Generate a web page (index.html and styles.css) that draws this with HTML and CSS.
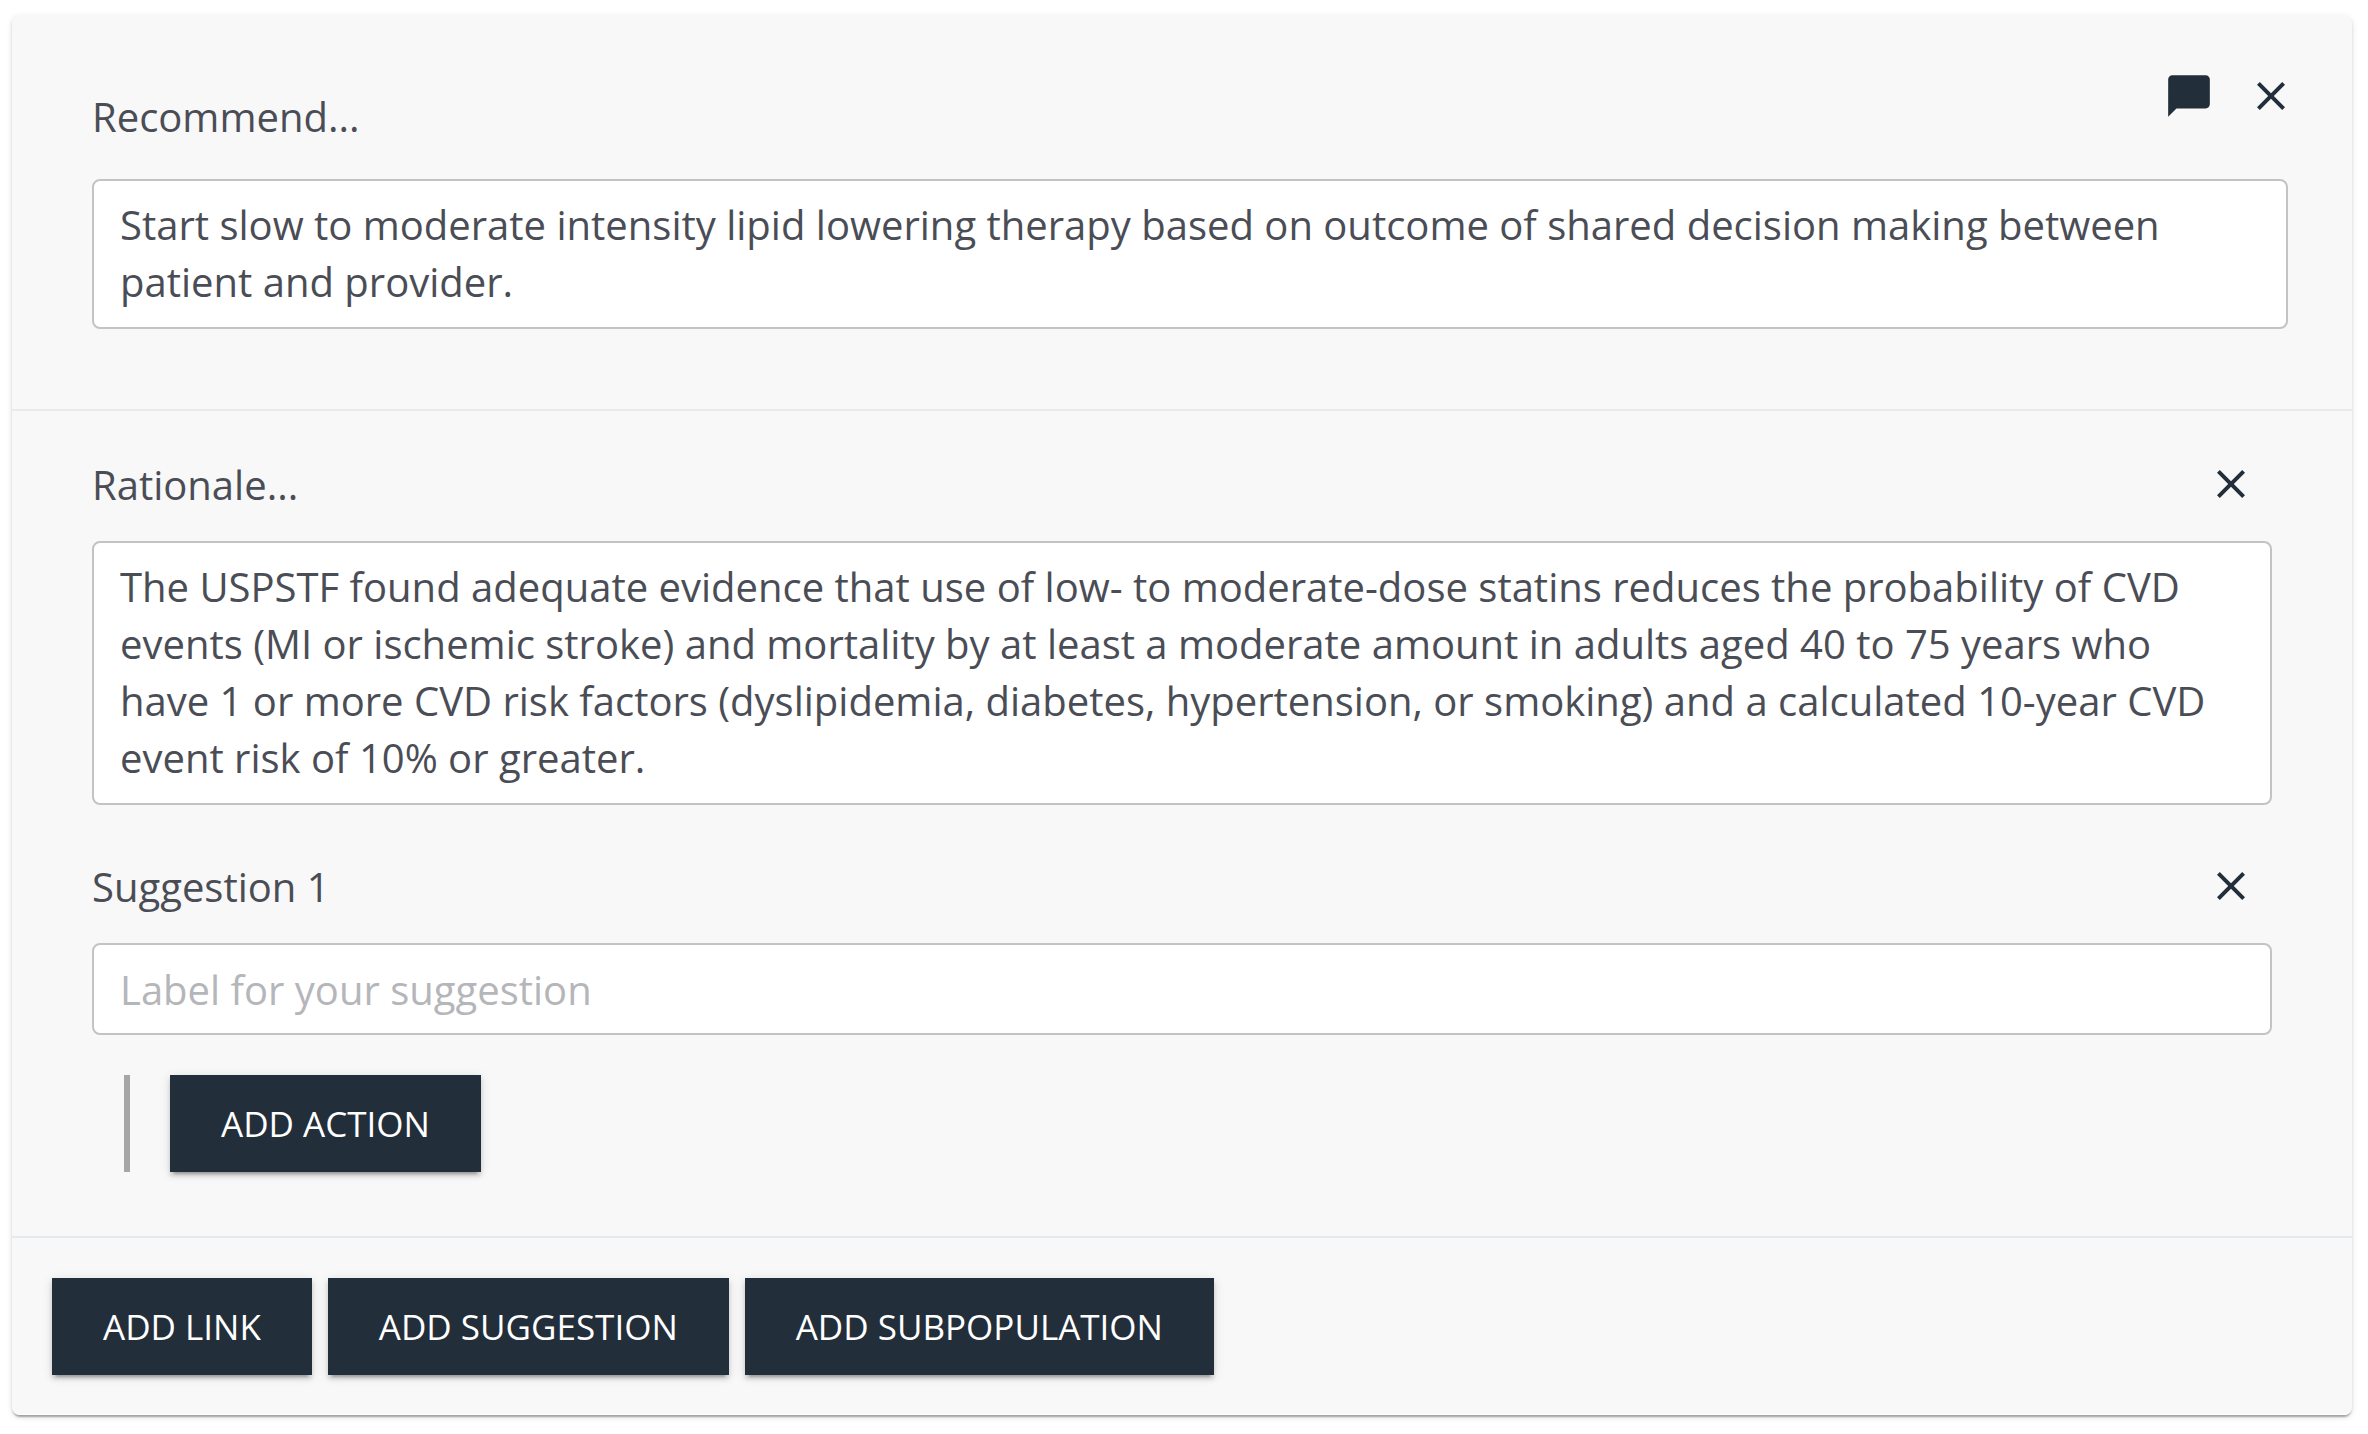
FILE: index.html
```html
<!DOCTYPE html>
<html lang="en">
<head>
  <meta charset="utf-8">
  <meta name="viewport" content="width=device-width, initial-scale=1">
  <title>Recommendation</title>
  <link rel="stylesheet" href="styles.css">
</head>
<body>
  <main class="card">
    <section class="recommendation">
      <header class="recommendation-header">
        <label class="label" for="recommend">Recommend...</label>
        <div class="actions">
          <button class="icon-button" type="button" aria-label="Comment">
            <svg class="icon icon-comment" viewBox="0 0 24 24" aria-hidden="true"><path d="M20 2H4c-1.1 0-1.99.9-1.99 2L2 22l4-4h14c1.1 0 2-.9 2-2V4c0-1.1-.9-2-2-2z"/></svg>
          </button>
          <button class="icon-button" type="button" aria-label="Remove recommendation">
            <svg class="icon" viewBox="0 0 24 24" aria-hidden="true"><path d="M19 6.41L17.59 5 12 10.59 6.41 5 5 6.41 10.59 12 5 17.59 6.41 19 12 13.41 17.59 19 19 17.59 13.41 12z"/></svg>
          </button>
        </div>
      </header>
      <div class="recommendation-body">
        <textarea class="field field-multiline" id="recommend" rows="2" spellcheck="false">Start slow to moderate intensity lipid lowering therapy based on outcome of shared decision making between patient and provider.</textarea>
      </div>
    </section>

    <section class="details">
      <div class="group">
        <header class="group-header">
          <label class="label" for="rationale">Rationale...</label>
          <button class="icon-button" type="button" aria-label="Remove rationale">
            <svg class="icon" viewBox="0 0 24 24" aria-hidden="true"><path d="M19 6.41L17.59 5 12 10.59 6.41 5 5 6.41 10.59 12 5 17.59 6.41 19 12 13.41 17.59 19 19 17.59 13.41 12z"/></svg>
          </button>
        </header>
        <textarea class="field field-multiline" id="rationale" rows="4" spellcheck="false">The USPSTF found adequate evidence that use of low- to moderate-dose statins reduces the probability of CVD events (MI or ischemic stroke) and mortality by at least a moderate amount in adults aged 40 to 75 years who have 1 or more CVD risk factors (dyslipidemia, diabetes, hypertension, or smoking) and a calculated 10-year CVD event risk of 10% or greater.</textarea>
      </div>

      <div class="group">
        <header class="group-header">
          <label class="label" for="suggestion">Suggestion 1</label>
          <button class="icon-button" type="button" aria-label="Remove suggestion">
            <svg class="icon" viewBox="0 0 24 24" aria-hidden="true"><path d="M19 6.41L17.59 5 12 10.59 6.41 5 5 6.41 10.59 12 5 17.59 6.41 19 12 13.41 17.59 19 19 17.59 13.41 12z"/></svg>
          </button>
        </header>
        <input class="field field-single" id="suggestion" type="text" placeholder="Label for your suggestion">
        <div class="nested">
          <button class="button" type="button">ADD ACTION</button>
        </div>
      </div>
    </section>

    <footer class="footer">
      <button class="button" type="button">ADD LINK</button>
      <button class="button" type="button">ADD SUGGESTION</button>
      <button class="button" type="button">ADD SUBPOPULATION</button>
    </footer>
  </main>
</body>
</html>
```

FILE: styles.css
```css
*,
*::before,
*::after {
  box-sizing: border-box;
}

body {
  margin: 0;
  padding: 15px 16px 17px 12px;
  background: #fff;
  color: #4a4d55;
  font-family: "Open Sans", "Noto Sans", sans-serif;
  font-size: 40px;
  line-height: 57px;
}

.card {
  background: #f8f8f8;
  border-radius: 8px;
  box-shadow:
    inset 0 -1px 0 #fff,
    0 4px 2px -2px rgba(0, 0, 0, 0.2),
    0 2px 2px 0 rgba(0, 0, 0, 0.14),
    0 2px 6px 0 rgba(0, 0, 0, 0.12);
}

.recommendation-header {
  display: flex;
  align-items: flex-end;
  justify-content: space-between;
  padding: 40px 41px 0 80px;
}

.actions {
  display: flex;
  align-items: center;
  gap: 1px;
  margin-bottom: 8px;
}

.recommendation-body {
  padding: 34px 64px 80px 80px;
}

.details {
  display: flex;
  flex-direction: column;
  gap: 41px;
  padding: 33px 80px 64px;
  border-top: 2px solid #e8ebed;
}

.group-header {
  display: flex;
  align-items: center;
  justify-content: space-between;
  margin-bottom: 17px;
  padding-right: 1px;
}

.icon-button {
  display: flex;
  padding: 16px;
  border: 0;
  border-radius: 50%;
  background: none;
  color: #222e3a;
  cursor: pointer;
}

.icon {
  width: 48px;
  height: 48px;
  fill: currentColor;
}

.icon-comment {
  width: 50px;
  height: 50px;
}

.field {
  display: block;
  width: 100%;
  margin: 0;
  border: 2px solid #c3c3c3;
  border-radius: 8px;
  background: #fff;
  color: inherit;
  font: inherit;
}

.field-multiline {
  padding: 15px 26px 17px;
  overflow: hidden;
  resize: none;
}

.field-single {
  height: 92px;
  padding: 0 26px;
}

.field::placeholder {
  color: #b5b6ba;
  opacity: 1;
}

.nested {
  margin: 40px 0 0 32px;
  padding-left: 40px;
  border-left: 6px solid #a6a6a6;
}

.button {
  display: block;
  padding: 20px 51px;
  border: 0;
  background: #222e3a;
  box-shadow:
    0 6px 2px -4px rgba(0, 0, 0, 0.2),
    0 4px 4px 0 rgba(0, 0, 0, 0.14),
    0 2px 10px 0 rgba(0, 0, 0, 0.12);
  color: #fff;
  font: inherit;
  font-size: 35px;
  cursor: pointer;
}

.footer {
  display: flex;
  flex-wrap: wrap;
  gap: 16px;
  padding: 40px;
  border-top: 2px solid #e5eaee;
}
```
